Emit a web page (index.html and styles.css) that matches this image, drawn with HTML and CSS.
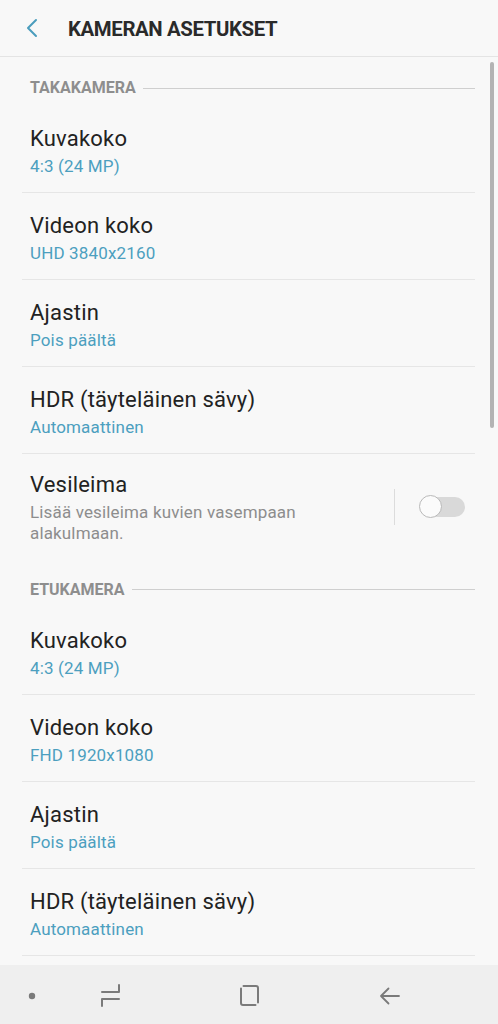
FILE: index.html
```html
<!DOCTYPE html>
<html lang="fi">
<head>
<meta charset="utf-8">
<title>Kameran asetukset</title>
<link rel="stylesheet" href="styles.css">
</head>
<body>
<div class="screen">
  <header class="appbar">
    <svg class="back" width="20" height="24" viewBox="0 0 20 24"><path d="M12 4 L4 12 L12 20" fill="none" stroke="#4a9dbd" stroke-width="2" stroke-linecap="round" stroke-linejoin="round"/></svg>
    <h1 class="title">KAMERAN ASETUKSET</h1>
  </header>
  <main class="content">
    <div class="scrollbar"></div>
    <div class="section"><span class="section-label">TAKAKAMERA</span><span class="section-line"></span></div>
    <div class="row"><div class="row-title">Kuvakoko</div><div class="row-value">4:3 (24 MP)</div></div>
    <div class="divider"></div>
    <div class="row"><div class="row-title">Videon koko</div><div class="row-value">UHD 3840x2160</div></div>
    <div class="divider"></div>
    <div class="row"><div class="row-title">Ajastin</div><div class="row-value">Pois päältä</div></div>
    <div class="divider"></div>
    <div class="row"><div class="row-title">HDR (täyteläinen sävy)</div><div class="row-value">Automaattinen</div></div>
    <div class="divider"></div>
    <div class="row row-switch">
      <div class="row-text">
        <div class="row-title">Vesileima</div>
        <div class="row-desc">Lisää vesileima kuvien vasempaan alakulmaan.</div>
      </div>
      <div class="switch-area">
        <span class="vsep"></span>
        <span class="switch"><span class="knob"></span></span>
      </div>
    </div>
    <div class="section section-2"><span class="section-label">ETUKAMERA</span><span class="section-line"></span></div>
    <div class="row"><div class="row-title">Kuvakoko</div><div class="row-value">4:3 (24 MP)</div></div>
    <div class="divider"></div>
    <div class="row"><div class="row-title">Videon koko</div><div class="row-value">FHD 1920x1080</div></div>
    <div class="divider"></div>
    <div class="row"><div class="row-title">Ajastin</div><div class="row-value">Pois päältä</div></div>
    <div class="divider"></div>
    <div class="row"><div class="row-title">HDR (täyteläinen sävy)</div><div class="row-value">Automaattinen</div></div>
    <div class="divider"></div>
  </main>
  <nav class="navbar">
    <svg class="nav-icon" width="498" height="59" viewBox="0 965 498 59">
      <circle cx="32" cy="996" r="3.2" fill="#7a7a7a"/>
      <path d="M102 992 H119 V985" fill="none" stroke="#7a7a7a" stroke-width="2" stroke-linecap="round" stroke-linejoin="round"/>
      <path d="M119 999 H102 V1006" fill="none" stroke="#7a7a7a" stroke-width="2" stroke-linecap="round" stroke-linejoin="round"/>
      <path d="M241 988.5 V1003 Q241 1005 243 1005 H255.5" fill="none" stroke="#7a7a7a" stroke-width="2" stroke-linecap="round"/>
      <path d="M243.5 986 H256 Q258 986 258 988 V1002.5" fill="none" stroke="#7a7a7a" stroke-width="2" stroke-linecap="round"/>
      <path d="M381 996 H399 M388.5 988.5 L381 996 L388.5 1003.5" fill="none" stroke="#7a7a7a" stroke-width="1.8" stroke-linecap="round" stroke-linejoin="round"/>
    </svg>
  </nav>
</div>
</body>
</html>
```
FILE: styles.css
```css
html, body {
  margin: 0;
  padding: 0;
}
body {
  background: #f8f8f8;
  font-family: Roboto, "Noto Sans", "Liberation Sans", sans-serif;
  color: #252525;
}
.screen {
  width: 498px;
  height: 1024px;
  display: flex;
  flex-direction: column;
  overflow: hidden;
}
.appbar {
  height: 56px;
  flex: none;
  display: flex;
  align-items: center;
  border-bottom: 1px solid #e4e4e4;
  box-sizing: content-box;
}
.back {
  margin-left: 24px;
  margin-right: 24px;
}
.title {
  margin: 0;
  font-size: 21px;
  font-weight: 700;
  letter-spacing: -0.4px;
  color: #2a2a2a;
  transform: scaleX(0.97);
  transform-origin: left center;
  line-height: 26px;
  padding-top: 2px;
}
.content {
  flex: 1;
  position: relative;
  overflow: hidden;
}
.scrollbar {
  position: absolute;
  left: 490px;
  top: 5px;
  width: 4px;
  height: 366px;
  border-radius: 2px;
  background: #b3b3b3;
}
.section {
  display: flex;
  align-items: center;
  padding: 21px 23px 8px 30px;
  height: 20px;
}
.section-label {
  font-size: 16px;
  font-weight: 700;
  color: #8e8e8e;
  letter-spacing: 0;
  line-height: 20px;
  white-space: nowrap;
}
.section-line {
  flex: 1;
  height: 1px;
  background: #cfcfcf;
  margin-left: 7px;
}
.row {
  padding: 20px 30px 16px 30px;
}
.row-title {
  font-size: 22px;
  letter-spacing: 0.2px;
  line-height: 26px;
  color: #222;
}
.row-value {
  margin-top: 4px;
  font-size: 17px;
  letter-spacing: 0.15px;
  line-height: 20px;
  color: #4c9fbf;
}
.divider {
  height: 1px;
  background: #e6e6e6;
  margin: 0 23px 0 22px;
}
.row-switch {
  display: flex;
  align-items: flex-start;
  padding: 18px 33px 15px 30px;
}
.row-text {
  flex: 1;
}
.row-desc {
  margin-top: 3.5px;
  font-size: 17px;
  letter-spacing: 0.15px;
  line-height: 21px;
  color: #8d8d8d;
  max-width: 300px;
}
.switch-area {
  display: flex;
  align-items: center;
  height: 36px;
  margin-top: 17px;
}
.vsep {
  width: 1px;
  height: 36px;
  background: #dcdcdc;
  margin-right: 25px;
}
.switch {
  position: relative;
  width: 45px;
  height: 20px;
  border-radius: 10px;
  background: #d9d9d9;
  display: block;
}
.knob {
  position: absolute;
  left: -1px;
  top: -2px;
  width: 21px;
  height: 21px;
  border-radius: 50%;
  background: #fbfbfb;
  border: 1.5px solid #b9b9b9;
}
.navbar {
  height: 59px;
  flex: none;
  background: #efefef;
}
.nav-icon {
  display: block;
}
```
